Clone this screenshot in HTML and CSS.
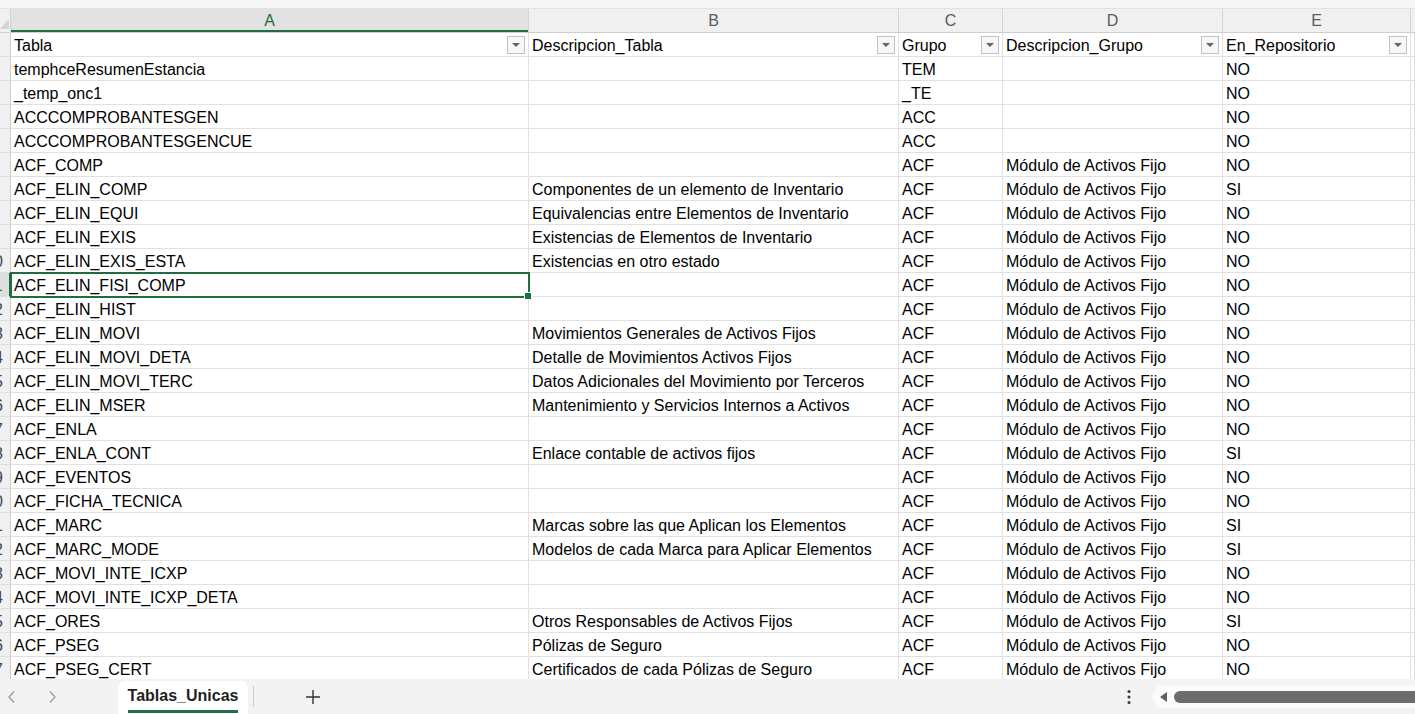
FILE: index.html
```html
<!DOCTYPE html>
<html lang="es">
<head>
<meta charset="utf-8">
<title>Tablas_Unicas</title>
<link rel="stylesheet" href="styles.css">
</head>
<body>
<div class="app">
  <div class="topstrip"></div>
  <div class="colheads">
    <div class="corner"><svg width="11" height="23" viewBox="0 0 11 23"><path d="M0 20 L9 20 L9 10 Z" fill="#d4d4d4"/></svg></div>
    <div class="ch chsel">A</div>
    <div class="ch">B</div>
    <div class="ch">C</div>
    <div class="ch">D</div>
    <div class="ch">E</div>
    <div class="ch chlast"></div>
  </div>
  <div class="sheet">
    <div class="row"><div class="rn"><span>1</span></div><div class="c hc"><span>Tabla</span><i class="fb"></i></div><div class="c hc"><span>Descripcion_Tabla</span><i class="fb"></i></div><div class="c hc"><span>Grupo</span><i class="fb"></i></div><div class="c hc"><span>Descripcion_Grupo</span><i class="fb"></i></div><div class="c hc"><span>En_Repositorio</span><i class="fb"></i></div><div class="c"></div></div>
    <div class="row"><div class="rn"><span>2</span></div><div class="c">temphceResumenEstancia</div><div class="c"></div><div class="c">TEM</div><div class="c"></div><div class="c">NO</div><div class="c"></div></div>
    <div class="row"><div class="rn"><span>3</span></div><div class="c">_temp_onc1</div><div class="c"></div><div class="c">_TE</div><div class="c"></div><div class="c">NO</div><div class="c"></div></div>
    <div class="row"><div class="rn"><span>4</span></div><div class="c">ACCCOMPROBANTESGEN</div><div class="c"></div><div class="c">ACC</div><div class="c"></div><div class="c">NO</div><div class="c"></div></div>
    <div class="row"><div class="rn"><span>5</span></div><div class="c">ACCCOMPROBANTESGENCUE</div><div class="c"></div><div class="c">ACC</div><div class="c"></div><div class="c">NO</div><div class="c"></div></div>
    <div class="row"><div class="rn"><span>6</span></div><div class="c">ACF_COMP</div><div class="c"></div><div class="c">ACF</div><div class="c">Módulo de Activos Fijo</div><div class="c">NO</div><div class="c"></div></div>
    <div class="row"><div class="rn"><span>7</span></div><div class="c">ACF_ELIN_COMP</div><div class="c">Componentes de un elemento de Inventario</div><div class="c">ACF</div><div class="c">Módulo de Activos Fijo</div><div class="c">SI</div><div class="c"></div></div>
    <div class="row"><div class="rn"><span>8</span></div><div class="c">ACF_ELIN_EQUI</div><div class="c">Equivalencias entre Elementos de Inventario</div><div class="c">ACF</div><div class="c">Módulo de Activos Fijo</div><div class="c">NO</div><div class="c"></div></div>
    <div class="row"><div class="rn"><span>9</span></div><div class="c">ACF_ELIN_EXIS</div><div class="c">Existencias de Elementos de Inventario</div><div class="c">ACF</div><div class="c">Módulo de Activos Fijo</div><div class="c">NO</div><div class="c"></div></div>
    <div class="row"><div class="rn"><span>10</span></div><div class="c">ACF_ELIN_EXIS_ESTA</div><div class="c">Existencias en otro estado</div><div class="c">ACF</div><div class="c">Módulo de Activos Fijo</div><div class="c">NO</div><div class="c"></div></div>
    <div class="row"><div class="rn rnsel"><span>11</span></div><div class="c sel">ACF_ELIN_FISI_COMP</div><div class="c"></div><div class="c">ACF</div><div class="c">Módulo de Activos Fijo</div><div class="c">NO</div><div class="c"></div></div>
    <div class="row"><div class="rn"><span>12</span></div><div class="c">ACF_ELIN_HIST</div><div class="c"></div><div class="c">ACF</div><div class="c">Módulo de Activos Fijo</div><div class="c">NO</div><div class="c"></div></div>
    <div class="row"><div class="rn"><span>13</span></div><div class="c">ACF_ELIN_MOVI</div><div class="c">Movimientos Generales de Activos Fijos</div><div class="c">ACF</div><div class="c">Módulo de Activos Fijo</div><div class="c">NO</div><div class="c"></div></div>
    <div class="row"><div class="rn"><span>14</span></div><div class="c">ACF_ELIN_MOVI_DETA</div><div class="c">Detalle de Movimientos Activos Fijos</div><div class="c">ACF</div><div class="c">Módulo de Activos Fijo</div><div class="c">NO</div><div class="c"></div></div>
    <div class="row"><div class="rn"><span>15</span></div><div class="c">ACF_ELIN_MOVI_TERC</div><div class="c">Datos Adicionales del Movimiento por Terceros</div><div class="c">ACF</div><div class="c">Módulo de Activos Fijo</div><div class="c">NO</div><div class="c"></div></div>
    <div class="row"><div class="rn"><span>16</span></div><div class="c">ACF_ELIN_MSER</div><div class="c">Mantenimiento y Servicios Internos a Activos</div><div class="c">ACF</div><div class="c">Módulo de Activos Fijo</div><div class="c">NO</div><div class="c"></div></div>
    <div class="row"><div class="rn"><span>17</span></div><div class="c">ACF_ENLA</div><div class="c"></div><div class="c">ACF</div><div class="c">Módulo de Activos Fijo</div><div class="c">NO</div><div class="c"></div></div>
    <div class="row"><div class="rn"><span>18</span></div><div class="c">ACF_ENLA_CONT</div><div class="c">Enlace contable de activos fijos</div><div class="c">ACF</div><div class="c">Módulo de Activos Fijo</div><div class="c">SI</div><div class="c"></div></div>
    <div class="row"><div class="rn"><span>19</span></div><div class="c">ACF_EVENTOS</div><div class="c"></div><div class="c">ACF</div><div class="c">Módulo de Activos Fijo</div><div class="c">NO</div><div class="c"></div></div>
    <div class="row"><div class="rn"><span>20</span></div><div class="c">ACF_FICHA_TECNICA</div><div class="c"></div><div class="c">ACF</div><div class="c">Módulo de Activos Fijo</div><div class="c">NO</div><div class="c"></div></div>
    <div class="row"><div class="rn"><span>21</span></div><div class="c">ACF_MARC</div><div class="c">Marcas sobre las que Aplican los Elementos</div><div class="c">ACF</div><div class="c">Módulo de Activos Fijo</div><div class="c">SI</div><div class="c"></div></div>
    <div class="row"><div class="rn"><span>22</span></div><div class="c">ACF_MARC_MODE</div><div class="c">Modelos de cada Marca para Aplicar Elementos</div><div class="c">ACF</div><div class="c">Módulo de Activos Fijo</div><div class="c">SI</div><div class="c"></div></div>
    <div class="row"><div class="rn"><span>23</span></div><div class="c">ACF_MOVI_INTE_ICXP</div><div class="c"></div><div class="c">ACF</div><div class="c">Módulo de Activos Fijo</div><div class="c">NO</div><div class="c"></div></div>
    <div class="row"><div class="rn"><span>24</span></div><div class="c">ACF_MOVI_INTE_ICXP_DETA</div><div class="c"></div><div class="c">ACF</div><div class="c">Módulo de Activos Fijo</div><div class="c">NO</div><div class="c"></div></div>
    <div class="row"><div class="rn"><span>25</span></div><div class="c">ACF_ORES</div><div class="c">Otros Responsables de Activos Fijos</div><div class="c">ACF</div><div class="c">Módulo de Activos Fijo</div><div class="c">SI</div><div class="c"></div></div>
    <div class="row"><div class="rn"><span>26</span></div><div class="c">ACF_PSEG</div><div class="c">Pólizas de Seguro</div><div class="c">ACF</div><div class="c">Módulo de Activos Fijo</div><div class="c">NO</div><div class="c"></div></div>
    <div class="row"><div class="rn"><span>27</span></div><div class="c">ACF_PSEG_CERT</div><div class="c">Certificados de cada Pólizas de Seguro</div><div class="c">ACF</div><div class="c">Módulo de Activos Fijo</div><div class="c">NO</div><div class="c"></div></div>
  </div>
  <div class="tabbar">
    <div class="nav">
      <svg class="chev" width="10" height="14" viewBox="0 0 10 14"><path d="M7 1.5 L2 7 L7 12.5" fill="none" stroke="#9a9a9a" stroke-width="1.3"/></svg>
      <svg class="chev" width="10" height="14" viewBox="0 0 10 14"><path d="M3 1.5 L8 7 L3 12.5" fill="none" stroke="#9a9a9a" stroke-width="1.3"/></svg>
    </div>
    <div class="tab"><span class="tabname">Tablas_Unicas</span></div>
    <div class="tabsep"></div>
    <div class="add"><svg width="16" height="16" viewBox="0 0 16 16"><path d="M8 1 V15 M1 8 H15" stroke="#333" stroke-width="1.4" fill="none"/></svg></div>
    <div class="spacer"></div>
    <div class="more"><svg width="4" height="16" viewBox="0 0 4 16"><circle cx="2" cy="2.5" r="1.5" fill="#3a3a3a"/><circle cx="2" cy="8" r="1.5" fill="#3a3a3a"/><circle cx="2" cy="13.5" r="1.5" fill="#3a3a3a"/></svg></div>
    <div class="hscroll">
      <svg width="10" height="12" viewBox="0 0 10 12"><path d="M9 1 L2 6 L9 11 Z" fill="#5f5f5f"/></svg>
      <div class="thumb"></div>
    </div>
  </div>
</div>
</body>
</html>
```
FILE: styles.css
```css
* { box-sizing: border-box; }
html, body { margin: 0; padding: 0; }
body {
  font-family: "Liberation Sans", Arial, sans-serif;
  background: #ffffff;
  color: #000;
  overflow: hidden;
}
.app {
  width: 1415px;
  height: 714px;
  display: flex;
  flex-direction: column;
  overflow: hidden;
}
.topstrip {
  height: 9px;
  flex: none;
  background: #f6f6f6;
  border-bottom: 1px solid #e2e2e2;
}
.colheads {
  height: 24px;
  flex: none;
  display: grid;
  grid-template-columns: 11px 518px 370px 104px 220px 188px 1fr;
  background: #f0f0f0;
  border-bottom: 1px solid #cfcfcf;
}
.corner {
  border-right: 1px solid #d4d4d4;
  overflow: hidden;
}
.corner svg { display: block; }
.ch {
  border-right: 1px solid #d4d4d4;
  font-size: 16px;
  line-height: 23px;
  text-align: center;
  color: #5c5c5c;
}
.chsel {
  background: #e1e1e1;
  color: #1c6b3e;
  box-shadow: inset 0 -2px 0 #1e6e42;
}
.chlast { border-right: none; }
.sheet {
  flex: 1;
  overflow: hidden;
  background: #fff;
}
.row {
  display: grid;
  grid-template-columns: 11px 518px 370px 104px 220px 188px 1fr;
  height: 24px;
}
.rn {
  background: #f0f0f0;
  border-right: 1px solid #cfcfcf;
  border-bottom: 1px solid #dedede;
  overflow: hidden;
}
.rn span {
  display: block;
  width: 32px;
  margin-left: -22px;
  text-align: center;
  font-size: 16px;
  line-height: 21px;
  padding-top: 2px;
  color: #444;
}
.rnsel {
  background: #dedede;
  border-right: 2px solid #1e6e42;
}
.rnsel span { color: #1c6b3e; }
.c {
  border-right: 1px solid #e1e1e1;
  border-bottom: 1px solid #e1e1e1;
  padding-left: 3px;
  padding-top: 2px;
  font-size: 16px;
  line-height: 21px;
  white-space: nowrap;
  overflow: hidden;
  color: #000;
}
.hc {
  display: flex;
  align-items: center;
  justify-content: space-between;
  padding-right: 3px;
  padding-top: 0;
}
.hc span { padding-top: 2px; }
.fb {
  width: 18px;
  height: 18px;
  flex: none;
  border: 1px solid #c2c2c2;
  background: #f7f7f7;
  display: flex;
  align-items: center;
  justify-content: center;
}
.fb::before {
  content: "";
  width: 0;
  height: 0;
  border-left: 4px solid transparent;
  border-right: 4px solid transparent;
  border-top: 4px solid #646464;
}
.sel {
  position: relative;
  overflow: visible;
  outline: 2px solid #1e6e42;
  outline-offset: -1px;
}
.sel::after {
  content: "";
  position: absolute;
  right: -4px;
  bottom: -4px;
  width: 6px;
  height: 6px;
  background: #1e6e42;
  border: 1px solid #fff;
}
.tabbar {
  height: 35px;
  flex: none;
  background: #f3f3f3;
  display: flex;
  align-items: stretch;
}
.nav {
  width: 118px;
  display: flex;
  align-items: center;
  padding-left: 7px;
  gap: 30px;
}
.chev { display: block; }
.tab {
  width: 130px;
  margin-top: 2px;
  background: #ffffff;
  border-radius: 7px 7px 0 0;
  display: flex;
  flex-direction: column;
  align-items: center;
  padding-top: 5px;
}
.tabname {
  font-weight: bold;
  font-size: 16px;
  line-height: 20px;
  color: #1f1f1f;
}
.tab::after {
  content: "";
  width: 110px;
  height: 3px;
  margin-top: 4px;
  background: #1e7145;
}
.tabsep {
  width: 1px;
  margin: 7px 0 7px 5px;
  background: #cacaca;
}
.add {
  width: 118px;
  display: flex;
  align-items: center;
  justify-content: center;
}
.add svg { display: block; }
.spacer { flex: 1; }
.more {
  width: 20px;
  display: flex;
  align-items: center;
  justify-content: center;
  margin-right: 14px;
}
.more svg { display: block; }
.hscroll {
  width: 262px;
  margin: 6px 0 6px 0;
  background: #fbfbfb;
  border-radius: 11px 0 0 11px;
  display: flex;
  align-items: center;
  padding-left: 5px;
  gap: 6px;
}
.hscroll svg { display: block; flex: none; }
.thumb {
  flex: 1;
  height: 12px;
  background: #6c6c6c;
  border-radius: 6px 0 0 6px;
}
```
